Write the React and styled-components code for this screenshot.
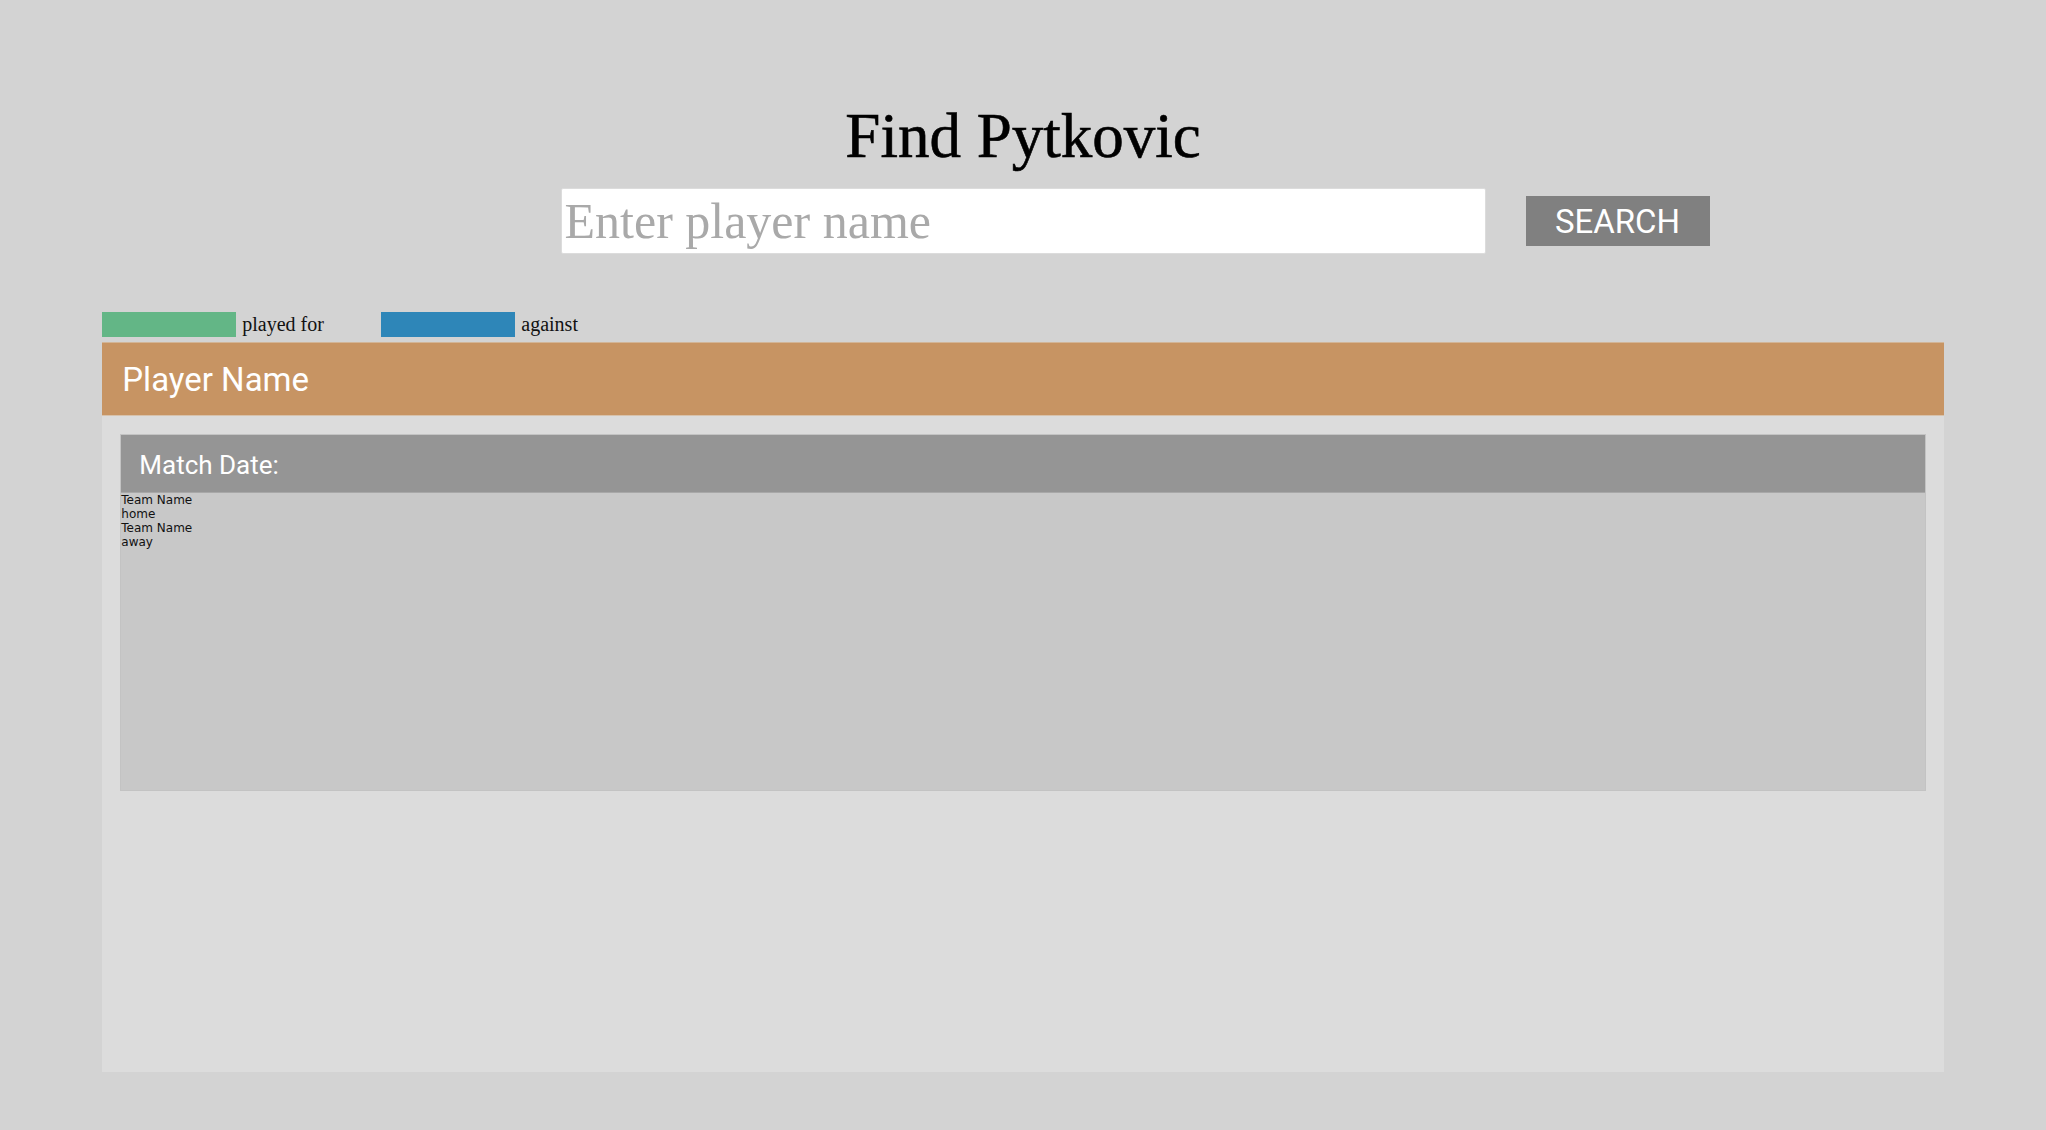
import React from "react";
import styled, { createGlobalStyle } from "styled-components";

const GlobalStyle = createGlobalStyle`
  html, body {
    margin: 0;
    padding: 0;
    background: #d3d3d3;
  }
  body {
    font-family: "Liberation Serif", "DejaVu Serif", serif;
  }
`;

const Page = styled.div`
  min-height: 1130px;
  padding: 99px 5% 0;
  box-sizing: border-box;
`;

const Title = styled.h1`
  margin: 0;
  text-align: center;
  font-family: "Liberation Serif", serif;
  font-weight: 400;
  font-size: 63px;
  line-height: 74px;
  color: #000;
  -webkit-text-stroke: 0.6px #000;
`;

const SearchRow = styled.form`
  display: grid;
  grid-template-columns: 1fr 925px 1fr;
  align-items: center;
  margin: 15px -5% 0;
`;

const SearchInput = styled.input`
  grid-column: 2;
  height: 66px;
  box-sizing: border-box;
  border: 1px solid #dcdcdc;
  border-radius: 2px;
  background: #fff;
  padding: 0 3px;
  font-family: "Liberation Serif", serif;
  font-size: 50px;
  color: #333;
  outline: none;

  &::placeholder {
    color: #a9a9a9;
  }
`;

const SearchButton = styled.button`
  grid-column: 3;
  justify-self: start;
  margin-left: 40px;
  width: 184px;
  height: 50px;
  border: none;
  border-radius: 0;
  background: #808080;
  color: #fff;
  font-family: Roboto, "Liberation Sans", sans-serif;
  font-size: 33px;
  cursor: pointer;
`;

const Legend = styled.div`
  display: flex;
  align-items: flex-start;
  margin-top: 58px;
  height: 30px;
`;

const LegendItem = styled.div`
  display: flex;
  align-items: center;
  width: 279px;
  height: 25px;
  font-size: 20px;
  color: #111;
`;

const Swatch = styled.span`
  display: inline-block;
  width: 134px;
  height: 25px;
  margin-right: 6px;
  background: ${(p) => p.color};
`;

const PlayerCard = styled.section`
  display: flex;
  flex-direction: column;
  height: 730px;
  background: #dcdcdc;
`;

const PlayerHeader = styled.h2`
  margin: 0;
  padding: 18px 18px 16px 20px;
  background: #c79463;
  border-top: 1px solid #d2b597;
  border-bottom: 1px solid #d8c2ab;
  font-family: Roboto, "Liberation Sans", sans-serif;
  font-weight: 400;
  font-size: 33px;
  line-height: 38px;
  color: #fff;
`;

const PlayerBody = styled.div`
  flex: 1;
  padding: 18px;
`;

const MatchCard = styled.article`
  border: 1px solid #c3c3c3;
  background: #c8c8c8;
`;

const MatchHeader = styled.h3`
  margin: 0;
  padding: 15px 18px 12px;
  background: #959595;
  border-bottom: 1px solid #a8a8a8;
  font-family: Roboto, "Liberation Sans", sans-serif;
  font-weight: 400;
  font-size: 26px;
  line-height: normal;
  color: #fff;
`;

const MatchBody = styled.div`
  height: 297px;
  font-family: "DejaVu Sans", sans-serif;
  font-size: 12px;
  line-height: 14px;
  color: #111;
`;

const Line = styled.div``;

export default function App() {
  return (
    <>
      <GlobalStyle />
      <Page>
        <Title>Find Pytkovic</Title>
        <SearchRow onSubmit={(e) => e.preventDefault()}>
          <SearchInput placeholder="Enter player name" />
          <SearchButton type="submit">SEARCH</SearchButton>
        </SearchRow>

        <Legend>
          <LegendItem>
            <Swatch color="#63b686" />
            played for
          </LegendItem>
          <LegendItem>
            <Swatch color="#2e86b8" />
            against
          </LegendItem>
        </Legend>

        <PlayerCard>
          <PlayerHeader>Player Name</PlayerHeader>
          <PlayerBody>
            <MatchCard>
              <MatchHeader>Match Date:</MatchHeader>
              <MatchBody>
                <Line>Team Name</Line>
                <Line>home</Line>
                <Line>Team Name</Line>
                <Line>away</Line>
              </MatchBody>
            </MatchCard>
          </PlayerBody>
        </PlayerCard>
      </Page>
    </>
  );
}
